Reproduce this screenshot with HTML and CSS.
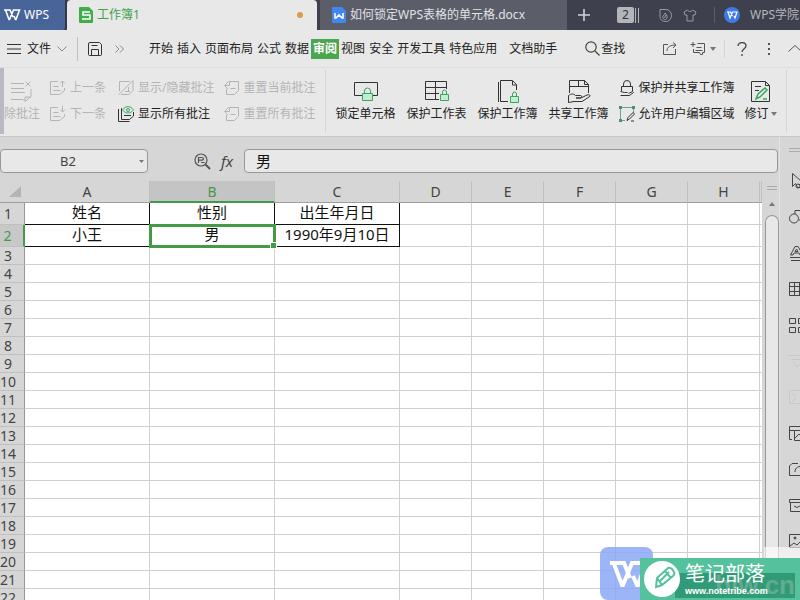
FILE: index.html
```html
<!DOCTYPE html>
<html lang="zh-CN">
<head>
    <meta charset="UTF-8">
    <meta name="viewport" content="width=device-width, initial-scale=1.0">
    <title>工作簿1 - WPS</title>
    <link rel="stylesheet" href="styles.css">
</head>
<body>

    <!-- Document tabs -->
    <header class="titlebar">
        <button class="home-tab">
            <svg width="17" height="12" viewBox="0 0 17 12" fill="none" stroke="#fff" stroke-width="1.600"><path d="M0 1h6l3 7M1.500 1l3.500 9.500h.5L9.500 1h6L12 10.500h-.5L10 7"/></svg>
            WPS
        </button>
        <button class="doc-tab active">
            <svg width="14" height="16" viewBox="0 0 14 16"><path d="M1 0h9l4 4v11a1 1 0 0 1-1 1H1a1 1 0 0 1-1-1V1a1 1 0 0 1 1-1z" fill="#3fae49"/><path d="M11 5H4v3h7v4H3" fill="none" stroke="#fff" stroke-width="1.6"/></svg>
            <span class="doc-name">工作簿1</span>
            <span class="unsaved"></span>
        </button>
        <button class="doc-tab">
            <svg width="14" height="16" viewBox="0 0 14 16"><path d="M1 0h9l4 4v11a1 1 0 0 1-1 1H1a1 1 0 0 1-1-1V1a1 1 0 0 1 1-1z" fill="#4286f0"/><path d="M3 6v5h1l3-3 3 3h1V6" fill="none" stroke="#fff" stroke-width="1.6"/></svg>
            <span class="doc-name">如何锁定WPS表格的单元格.docx</span>
        </button>
        <div class="title-tools">
            <button class="new-tab" aria-label="新建">
                <svg width="12" height="12" viewBox="0 0 12 12" stroke="#d0d0d6" stroke-width="1.6"><path d="M6 0v12M0 6h12"/></svg>
            </button>
            <span class="tab-count">2</span>
            <span class="tab-stack"></span>
            <svg class="tool-eco" width="13" height="13" viewBox="0 0 13 13" fill="none" stroke="#9698a2"><path d="M1 .5h6a5.500 6 0 0 1 0 12H6a5 5 0 0 1-5-5z"/><path d="M4 9c-1-2 1-2 2-5 1 2 3 3 2 5s-3 2-4 0zM6 9V7l2-1"/></svg>
            <svg class="tool-skin" width="14" height="13" viewBox="0 0 14 13" fill="none" stroke="#9698a2"><path d="M4.500 1 1 3l1 3h2v6h6V6h2l1-3-3.500-2c-1 2-4 2-5 0z"/></svg>
            <span class="title-sep"></span>
            <svg class="avatar" width="16" height="16" viewBox="0 0 16 16"><circle cx="8" cy="8" r="8" fill="#3e7ae8"/><path d="M3 5h3.500l2 4M4 5l2 6 2.500-6H13l-2 6-1-2" fill="none" stroke="#fff" stroke-width="1.200"/></svg>
            <span class="account">WPS学院</span>
        </div>
    </header>

    <!-- Menu -->
    <nav class="menubar">
        <button class="file-menu">
            <svg width="14" height="10" viewBox="0 0 14 10" stroke="#333"><path d="M0 .5h14M0 5h14M0 9.500h14"/></svg>
            文件
            <svg class="file-arrow" width="10" height="6" viewBox="0 0 10 6" fill="none" stroke="#888"><path d="m.5.5 4.500 4.500L9.500.5"/></svg>
        </button>
        <button class="save" aria-label="保存">
            <svg width="14" height="14" viewBox="0 0 14 14" fill="none" stroke="#333"><path d="M.5 12.500V2Q.5.500 2 .5h9.500l2 2v10q0 1-1 1h-11q-1 0-1-1zM3.500 3.500h6M3.500 13.500v-6h7v6"/></svg>
        </button>
        <button class="more" aria-label="更多">
            <svg width="9" height="8" viewBox="0 0 9 8" fill="none" stroke="#888"><path d="m.5.5 3.500 3.500L.5 7.500M5 .5 8.500 4 5 7.500"/></svg>
        </button>
        <div class="menu-tabs">
            <button>开始</button>
            <button>插入</button>
            <button>页面布局</button>
            <button>公式</button>
            <button>数据</button>
            <button class="current">审阅</button>
            <button>视图</button>
            <button>安全</button>
            <button>开发工具</button>
            <button>特色应用</button>
            <button class="helper">文档助手</button>
        </div>
        <button class="search">
            <svg width="15" height="15" viewBox="0 0 15 15" fill="none" stroke="#444" stroke-width="1.200"><circle cx="6" cy="6" r="5.200"/><path d="m10 10 4.500 4.500"/></svg>
            查找
        </button>
        <div class="menu-right">
            <svg width="14" height="13" viewBox="0 0 14 13" fill="none" stroke="#555"><path d="M5 2.500H.5v10h12V7M4 9c0-4 3-6 9-6M10 .5 13 3l-3 3"/></svg>
            <svg class="comment-icon" width="17" height="14" viewBox="0 0 17 14" fill="none" stroke="#555"><path d="M3 0v5M.5 2.500h5M7.500 1.500h7v9h-2v2h-2l-1-2H3.500V7M6.500 5.500h5M5.500 8.500h7"/></svg>
            <svg class="caret" width="6" height="4" viewBox="0 0 6 4"><path d="M0 0h6L3 4z" fill="#777"/></svg>
            <span class="menu-sep"></span>
            <svg class="help" width="10" height="14" viewBox="0 0 10 14" fill="none" stroke="#444" stroke-width="1.300"><path d="M1 4c0-4.500 8-4.500 8 0 0 2.500-4 3-4 6M5 12v2"/></svg>
            <svg class="dots" width="2" height="12" viewBox="0 0 2 12" fill="#555"><path d="M0 0h2v2H0zM0 5h2v2H0zM0 10h2v2H0z"/></svg>
            <svg class="fold" width="14" height="7" viewBox="0 0 14 7" fill="none" stroke="#555"><path d="m.5 6.500 6.500-6 6.500 6"/></svg>
        </div>
    </nav>

    <!-- Review ribbon -->
    <section class="ribbon">
        <button class="big-button delete-note" disabled>
            <svg width="22" height="22" viewBox="0 0 22 22" fill="none" stroke="#b4b4b4"><path d="M0 3.500h13M0 8.500h13M0 12.500h14M0 19.500h12l2 2 6-5V9M14.500 1.500l5 5M19.500 1.500l-5 5M14 21v-4h6"/></svg>
            <span>除批注</span>
        </button>
        <div class="pair prev-next">
            <button disabled>
                <svg width="16" height="16" viewBox="0 0 16 16" fill="none" stroke="#b4b4b4"><path d="M8 1.500H.5v13h9l5-4V8M3.500 6.500h5M3.500 10.500h7M12.500 7V1M10 3.500 12.500 1 15 3.500"/></svg>
                上一条
            </button>
            <button disabled>
                <svg width="16" height="16" viewBox="0 0 16 16" fill="none" stroke="#b4b4b4"><path d="M8 1.500H.5v13h9l5-4V8M3.500 6.500h5M3.500 10.500h7M12.500 0v6M10 3.500 12.500 6 15 3.500"/></svg>
                下一条
            </button>
        </div>
        <div class="pair show-notes">
            <button disabled>
                <svg width="16" height="16" viewBox="0 0 16 16" fill="none" stroke="#b4b4b4"><path d="M1.500 11V1.500H12M.5 15 15 .5v10l-4 4H3M7 11.500h5M10.500 7v4"/></svg>
                显示/隐藏批注
            </button>
            <button>
                <svg width="16" height="16" viewBox="0 0 16 16" fill="none" stroke="#333"><path d="M.5 3v12.500h11M4 2.500h-.5v11h8l4-3.500V6M6 9.500h7"/><path d="M4.500 4c3-4.500 8-4.500 11 0-3 4-8 4-11 0z" stroke="#35a85e"/><circle cx="10" cy="4" r="1.500" stroke="#35a85e"/></svg>
                显示所有批注
            </button>
        </div>
        <div class="pair reset-notes">
            <button disabled>
                <svg width="16" height="16" viewBox="0 0 16 16" fill="none" stroke="#b4b4b4"><path d="M6 1.500h8.500v9l-4 4h-8V9M1 5.500h4.500V1M4.500 1.500.5 5.500 4 9M6.500 8.500h5"/></svg>
                重置当前批注
            </button>
            <button disabled>
                <svg width="16" height="16" viewBox="0 0 16 16" fill="none" stroke="#b4b4b4"><path d="M6 1.500h8.500v9l-4 4h-8V9M1 5.500h4.500V1M4.500 1.500.5 5.500 4 9M6.500 8.500h5"/></svg>
                重置所有批注
            </button>
        </div>
        <span class="ribbon-sep"></span>
        <div class="protect">
            <button class="big-button">
                <svg width="24" height="24" viewBox="0 0 24 24" fill="none" stroke="#333"><path d="M8 15.500H.5v-13h23v13H19"/><path d="M10.500 13v-2a3 3 0 0 1 6 0v2" stroke="#35a85e"/><path d="M8.500 13.500h10v7h-10z" fill="#c4ecd0" stroke="#35a85e"/></svg>
                <span>锁定单元格</span>
            </button>
            <button class="big-button">
                <svg width="24" height="24" viewBox="0 0 24 24" fill="none" stroke="#333"><path d="M14 19.500H.5v-18h21V9M.5 7.500h21M.5 13.500H14M10.500 1.500v18"/><path d="M17.500 14v-2a2 2 0 0 1 4 0v2" stroke="#35a85e"/><path d="M15.500 14.500h8v6h-8z" fill="#c4ecd0" stroke="#35a85e"/></svg>
                <span>保护工作表</span>
            </button>
            <button class="big-button">
                <svg width="24" height="24" viewBox="0 0 24 24" fill="none" stroke="#333"><path d="M2.500 2v20M12 21.500H4.500V.5h12l4 4V10M16.500 1v4h4"/><path d="M16.500 16v-2a2 2 0 0 1 4 0v2" stroke="#35a85e"/><path d="M14.500 16.500h8v6h-8z" fill="#c4ecd0" stroke="#35a85e"/></svg>
                <span>保护工作簿</span>
            </button>
            <button class="big-button">
                <svg width="24" height="24" viewBox="0 0 24 24" fill="none" stroke="#333"><path d="M2.500 13V.5h15l4 4V13M2.500 6.500h19M11.500.5v6M17.500.5v4h4"/><path d="M1.500 15.500c3-2 5-2 7 0h5c2 0 1 2.500-1 2.500H9h5l6-3c3-1 4 1 2 2l-7 4.500H7l-5.500 1z" fill="#e8e8e8"/></svg>
                <span>共享工作簿</span>
            </button>
        </div>
        <div class="pair share-area">
            <button>
                <svg width="16" height="16" viewBox="0 0 16 16" fill="none" stroke="#333"><path d="M4.500 6V4a3.500 3.500 0 0 1 7 0v2M2.500 11V6.500h11V11M1.500 11.500l4 1h3M1.500 15.500h9l4-3-1-1-4 2"/></svg>
                保护并共享工作簿
            </button>
            <button>
                <svg width="16" height="16" viewBox="0 0 16 16" fill="none" stroke="#6ba38e"><path d="M1.500 1.500h13M1.500 2.500v12H6M14.500 2v5"/><path d="M0 0h3v3H0zM13 0h3v3h-3zM0 13h3v3H0z" fill="#4a8e75" stroke="none"/><path d="m8 14.500 1-3 5-5 1.500 1.500-5 5zM12 15h3" stroke="#333"/></svg>
                允许用户编辑区域
            </button>
        </div>
        <button class="big-button revise">
            <svg width="20" height="24" viewBox="0 0 20 24" fill="none" stroke="#333"><path d="M.5 1.500h14l4 4v16H.5zM14.500 1.500v4h4M4 6.500h6M4 10.500h4"/><path d="m5 19 2-5 7-6 2 2-7 7zM12 19h4" stroke="#35a85e" stroke-width="1.500"/></svg>
            <span>修订 <svg width="6" height="4" viewBox="0 0 6 4"><path d="M0 0h6L3 4z" fill="#777"/></svg></span>
        </button>
        <span class="ribbon-sep"></span>
    </section>

    <div class="workspace">
        <main class="editor">
            <div class="formula-bar">
                <div class="name-box">
                    <input type="text" aria-label="名称框" value="B2">
                    <svg width="5" height="3" viewBox="0 0 5 3"><path d="M0 0h5L2.500 3z" fill="#777"/></svg>
                </div>
                <svg class="zoom-icon" width="17" height="17" viewBox="0 0 17 17" fill="none" stroke="#555" stroke-width="1.200"><circle cx="7" cy="7" r="6"/><path d="M4.500 10V4.500H8q1.500 0 1.500 1.300T8 7.200H4.500M7 9.500h3.500"/><path d="m11.500 11.500 4.500 4.500" stroke-width="2"/></svg>
                <span class="fx">fx</span>
                <input class="formula" type="text" aria-label="编辑栏" value="男">
            </div>

            <div class="grid-area">
                <table class="sheet">
                    <colgroup>
                        <col class="col-head">
                        <col class="col-wide"><col class="col-wide"><col class="col-wide">
                        <col class="col-std"><col class="col-std"><col class="col-std"><col class="col-std"><col class="col-std">
                        <col>
                    </colgroup>
                    <thead>
                        <tr>
                            <th class="corner"><svg width="12" height="11" viewBox="0 0 12 11"><path d="M12 0v11H0z" fill="#b4b4b4"/></svg></th>
                            <th>A</th><th class="selected">B</th><th>C</th><th>D</th><th>E</th><th>F</th><th>G</th><th>H</th><th></th>
                        </tr>
                    </thead>
                    <tbody>
                        <tr class="data"><th>1</th><td>姓名</td><td class="above">性别</td><td>出生年月日</td><td></td><td></td><td></td><td></td><td></td><td></td></tr>
                        <tr class="data"><th class="selected">2</th><td>小王</td><td class="cursor">男</td><td>1990年9月10日</td><td></td><td></td><td></td><td></td><td></td><td></td></tr>
                        <tr><th>3</th><td></td><td></td><td></td><td></td><td></td><td></td><td></td><td></td><td></td></tr>
                        <tr><th>4</th><td></td><td></td><td></td><td></td><td></td><td></td><td></td><td></td><td></td></tr>
                        <tr><th>5</th><td></td><td></td><td></td><td></td><td></td><td></td><td></td><td></td><td></td></tr>
                        <tr><th>6</th><td></td><td></td><td></td><td></td><td></td><td></td><td></td><td></td><td></td></tr>
                        <tr><th>7</th><td></td><td></td><td></td><td></td><td></td><td></td><td></td><td></td><td></td></tr>
                        <tr><th>8</th><td></td><td></td><td></td><td></td><td></td><td></td><td></td><td></td><td></td></tr>
                        <tr><th>9</th><td></td><td></td><td></td><td></td><td></td><td></td><td></td><td></td><td></td></tr>
                        <tr><th>10</th><td></td><td></td><td></td><td></td><td></td><td></td><td></td><td></td><td></td></tr>
                        <tr><th>11</th><td></td><td></td><td></td><td></td><td></td><td></td><td></td><td></td><td></td></tr>
                        <tr><th>12</th><td></td><td></td><td></td><td></td><td></td><td></td><td></td><td></td><td></td></tr>
                        <tr><th>13</th><td></td><td></td><td></td><td></td><td></td><td></td><td></td><td></td><td></td></tr>
                        <tr><th>14</th><td></td><td></td><td></td><td></td><td></td><td></td><td></td><td></td><td></td></tr>
                        <tr><th>15</th><td></td><td></td><td></td><td></td><td></td><td></td><td></td><td></td><td></td></tr>
                        <tr><th>16</th><td></td><td></td><td></td><td></td><td></td><td></td><td></td><td></td><td></td></tr>
                        <tr><th>17</th><td></td><td></td><td></td><td></td><td></td><td></td><td></td><td></td><td></td></tr>
                        <tr><th>18</th><td></td><td></td><td></td><td></td><td></td><td></td><td></td><td></td><td></td></tr>
                        <tr><th>19</th><td></td><td></td><td></td><td></td><td></td><td></td><td></td><td></td><td></td></tr>
                        <tr><th>20</th><td></td><td></td><td></td><td></td><td></td><td></td><td></td><td></td><td></td></tr>
                        <tr><th>21</th><td></td><td></td><td></td><td></td><td></td><td></td><td></td><td></td><td></td></tr>
                        <tr><th>22</th><td></td><td></td><td></td><td></td><td></td><td></td><td></td><td></td><td></td></tr>
                    </tbody>
                </table>
                <div class="scrollbar">
                    <span class="split-handle"></span>
                    <svg width="6" height="4" viewBox="0 0 6 4"><path d="M0 4h6L3 0z" fill="#777"/></svg>
                    <div class="thumb"></div>
                </div>
            </div>
        </main>

        <!-- Side tools -->
        <aside class="side-panel">
            <span class="grip"></span>
            <svg viewBox="0 0 16 16"><path d="M3.500.5v13l3-3 2 4h4v-3h-3M3.500.5l9 8"/><circle cx="9" cy="13" r="2"/></svg>
            <svg viewBox="0 0 16 16"><circle cx="5" cy="9.500" r="4.500"/><path d="M6 5V1.500h9V11h-5"/></svg>
            <svg viewBox="0 0 16 16"><path d="M1.500 10 6 1.500h3L14 10h-3l-1-2H5l-1 2zM6 6.500h3L7.500 4zM1 12.500h15M2 15.500h14"/></svg>
            <svg viewBox="0 0 16 16"><path d="M.5 1.500h15v13H.5zM.5 5.500h15M.5 10.500h15M5.500 1.500v13M10.500 1.500v13"/></svg>
            <svg viewBox="0 0 16 16"><path d="M.5 1.500h6v5h-6zM9.500 1.500h6v5h-6zM.5 10.500h6v5h-6zM9.500 10.500h6v5h-6z"/></svg>
            <svg class="dim" viewBox="0 0 16 16"><path d="M0 2.500h16M3 6.500h12M4 8l4 6 6-6"/></svg>
            <svg class="dim" viewBox="0 0 16 16"><path d="M.5 1.500h15v13H.5zM3 4l4 4M3 13l4-4"/></svg>
            <svg viewBox="0 0 16 16"><path d="M3 14.500H.5v-13h15M5.500 5.500h10v10h-10zM.5 5.500h5M6 13l4-4 3 3 3-3"/></svg>
            <svg viewBox="0 0 16 16"><path d="M9 2.500H3L.5 5v9.500h14V9M6 11c0-5 4-6 9-6M12 1l4 4-4 4"/></svg>
            <svg viewBox="0 0 16 16"><path d="M.5 2.500h15v3H.5zM1.500 5.500v9h14M5 9q3 3 6 0"/></svg>
            <svg viewBox="0 0 16 16"><path d="M.5 1.500h15v13H.5zM1 13l4-3 3 2 5-5 2 2"/><circle cx="6" cy="5" r="1" fill="#444"/></svg>
        </aside>
    </div>

    <!-- Watermarks over the page corner -->
    <div class="haze"></div>
    <div class="wps-mark">
        <svg width="40" height="28" viewBox="0 0 40 28" fill="none" stroke="#fff" stroke-width="4"><path d="M0 3h14l6 15M4 4l8 21h1L22 3h14l-8 22h-1l-4-9"/></svg>
    </div>
    <div class="tribe-mark">
        <span class="domain">blw.cn</span>
        <svg width="36" height="36" viewBox="0 0 36 36"><circle cx="18" cy="18" r="18" fill="#fff"/><path d="m13 17 11-10q2-1 4 1l2 3q1 2-1 4L18 24l-6 2zM13 17l5 7M21 10l6 7M16 20l9-9" fill="none" stroke="#55c29d" stroke-width="2"/></svg>
        <div class="tribe-text">
            <strong>笔记部落</strong>
            <small>www.notetribe.com</small>
        </div>
    </div>

</body>
</html>
```
FILE: styles.css
```css
* {
    box-sizing: border-box;
}

body {
    margin: 0;
    height: 100vh;
    display: flex;
    flex-direction: column;
    overflow: hidden;
    font-family: "Noto Sans", "Noto Sans CJK SC", sans-serif;
    font-size: 12px;
    line-height: 16px;
    color: #222;
    background: #e8e8e8;
}

button {
    display: flex;
    align-items: center;
    padding: 0;
    border: none;
    background: none;
    font: inherit;
    color: inherit;
    white-space: nowrap;
}

button:disabled {
    color: #b4b4b4;
}

svg {
    flex: none;
}

/* title bar */
.titlebar {
    display: flex;
    flex: none;
    height: 30px;
    background: #3e404e;
    overflow: hidden;
}

.home-tab {
    flex: none;
    width: 67px;
    padding-left: 4px;
    gap: 3px;
    background: #48659a;
    border-right: 2px solid #36384a;
    border-radius: 0 0 4px 0;
    color: #fff;
}

.doc-tab {
    flex: none;
    width: 247px;
    margin-left: 3px;
    padding: 0 14px 0 12px;
    gap: 4px;
    background: #5b5d69;
    color: #e2e2e6;
}

.doc-tab.active {
    width: 250px;
    margin-left: 0;
    background: #e8e8e8;
    border-radius: 4px 4px 0 0;
    color: #3fa34a;
}

.doc-name {
    flex: 1;
    text-align: left;
}

.unsaved {
    width: 6px;
    height: 6px;
    border-radius: 50%;
    background: #e0984c;
}

.title-tools {
    display: flex;
    align-items: center;
    flex: 1;
    padding-left: 11px;
}

.tab-count {
    margin-left: 27px;
    width: 17px;
    text-align: center;
    background: #b4b5bb;
    color: #333;
    border-radius: 2px;
}

.tab-stack {
    width: 4px;
    height: 15px;
    margin: 0 20px 0 1px;
    border-left: 1px solid #b4b5bb;
    border-right: 1px solid #b4b5bb;
}

.tool-skin {
    margin-left: 11px;
}

.title-sep {
    width: 1px;
    height: 16px;
    margin: 0 9px 0 17px;
    background: #5b5d69;
}

.account {
    margin-left: 10px;
    color: #b4b5bb;
    white-space: nowrap;
}

/* menu */
.menubar {
    display: flex;
    flex: none;
    align-items: center;
    height: 38px;
    padding-left: 7px;
    border-bottom: 1px solid #dcdcdc;
}

.file-menu {
    gap: 6px;
    height: 24px;
    padding-right: 10px;
    border-right: 1px solid #c0c0c0;
}

.save {
    margin-left: 10px;
}

.more {
    margin-left: 13px;
}

.menu-tabs {
    display: flex;
    margin-left: 23px;
}

.menu-tabs button {
    height: 20px;
    padding: 0 2px;
}

.menu-tabs .current {
    background: #4ba650;
    color: #fff;
    font-weight: bold;
}

.menu-tabs .helper {
    margin-left: 8px;
}

.search {
    margin-left: 26px;
    gap: 1px;
}

.menu-right {
    display: flex;
    align-items: center;
    margin-left: auto;
    overflow: hidden;
}

.comment-icon {
    margin-left: 13px;
}

.caret {
    margin-left: 3px;
}

.menu-sep {
    width: 1px;
    height: 18px;
    margin-left: 8px;
    background: #d4d4d4;
}

.help {
    margin-left: 12px;
}

.dots {
    margin-left: 21px;
}

.fold {
    margin-left: 18px;
    margin-right: -2px;
}

/* ribbon */
.ribbon {
    display: flex;
    flex: none;
    align-items: center;
    height: 69px;
    padding-bottom: 2px;
    border-bottom: 1px solid #c8c8c8;
    overflow: hidden;
}

.big-button {
    flex-direction: column;
    gap: 2px;
}

.delete-note {
    justify-content: center;
    height: 66px;
    gap: 4px;
    border-left: 4px solid #b9b9c3;
}

.pair {
    display: flex;
    flex-direction: column;
    gap: 10px;
}

.pair button {
    gap: 4px;
}

.prev-next {
    margin-left: 10px;
}

.show-notes {
    margin-left: 12px;
}

.reset-notes {
    margin-left: 9px;
}

.ribbon-sep {
    flex: none;
    width: 1px;
    height: 62px;
    margin-left: 9px;
    background: #d4d4d4;
}

.protect {
    display: flex;
    gap: 11px;
    margin-left: 10px;
}

.share-area {
    margin-left: 10px;
}

.revise {
    margin-left: 10px;
}

.revise span {
    display: flex;
    align-items: center;
    gap: 2px;
}

/* work area */
.workspace {
    display: flex;
    flex: 1;
    min-height: 0;
    background: #d6d6d6;
}

.editor {
    display: flex;
    flex-direction: column;
    flex: 1;
    min-width: 0;
}

.formula-bar {
    display: flex;
    flex: none;
    align-items: center;
    height: 44px;
    padding: 4px 1px 0 0;
}

.name-box {
    display: flex;
    align-items: center;
    width: 148px;
    height: 24px;
    padding-right: 3px;
    border: 1px solid #979797;
    border-radius: 4px;
    background: #e8e8e8;
}

.name-box input {
    flex: 1;
    min-width: 0;
    border: none;
    background: none;
    padding: 0 4px 0 0;
    font: inherit;
    font-size: 13px;
    color: #444;
    text-align: center;
}

.zoom-icon {
    margin-left: 46px;
}

.fx {
    width: 23px;
    margin-left: 10px;
    font-size: 15px;
    font-style: italic;
    color: #444;
}

.formula {
    flex: 1;
    min-width: 0;
    height: 24px;
    padding: 0 11px 2px;
    border: 1px solid #979797;
    border-radius: 4px;
    background: #e8e8e8;
    font: inherit;
    font-size: 15px;
    color: #111;
}

/* sheet */
.grid-area {
    display: flex;
    flex: 1;
    min-height: 0;
    overflow: hidden;
}

.sheet {
    flex: 1;
    min-width: 0;
    align-self: flex-start;
    table-layout: fixed;
    border-collapse: separate;
    border-spacing: 0;
}

.col-head {
    width: 25px;
}

.col-wide {
    width: 125px;
}

.col-std {
    width: 72px;
}

.sheet th,
.sheet td {
    height: 18px;
    padding: 0;
    border-right: 1px solid #d0d0d0;
    border-bottom: 1px solid #d0d0d0;
    line-height: 17px;
    text-align: center;
}

.sheet th {
    border-color: #c0c0c0;
    font-size: 14px;
    font-weight: normal;
    color: #444;
}

.sheet thead th {
    height: 22px;
    border-bottom-color: #a0a0a0;
}

.sheet thead .selected {
    background: #c4c4c4;
    border-bottom: 2px solid #459a47;
    color: #459a47;
}

.sheet .corner {
    text-align: right;
    padding-right: 4px;
    border-right: none;
}

.sheet tbody th {
    padding-right: 8px;
    border-right-color: #979797;
}

.sheet tbody .selected {
    background: #c8c8c8;
    border-right: 2px solid #459a47;
    color: #459a47;
}

.sheet td {
    background: #fff;
    font-size: 15px;
    color: #111;
}

.sheet td:last-child {
    border-right: none;
}

.sheet .data th,
.sheet .data td {
    height: 22px;
    line-height: 19px;
}

.sheet .data td {
    padding-bottom: 2px;
}

.data td:nth-child(-n+4) {
    border-color: #111;
}

.sheet .cursor {
    position: relative;
    outline: 3px solid #459a47;
    outline-offset: -2px;
}

/* fill handle */
.cursor::after {
    content: "";
    position: absolute;
    right: -3px;
    bottom: -3px;
    width: 5px;
    height: 5px;
    background: #459a47;
    border: 1px solid #fff;
    box-sizing: content-box;
}

.scrollbar {
    display: flex;
    flex-direction: column;
    align-items: center;
    flex: none;
    width: 17px;
    padding-left: 3px;
}

.split-handle {
    flex: none;
    width: 10px;
    height: 4px;
    margin: 5px 0 12px;
    border: 1px solid #aaa;
    border-width: 1px 0;
}

.thumb {
    flex: 1;
    width: 14px;
    margin-top: 9px;
    border: 1px solid #979797;
    border-bottom: none;
    border-radius: 7px 7px 0 0;
    background: #e8e8e8;
}

/* side panel */
.side-panel {
    display: flex;
    flex-direction: column;
    flex: none;
    width: 21px;
    padding-left: 9px;
    border-left: 1px solid #e2e2e2;
    overflow: hidden;
}

.side-panel svg {
    width: 16px;
    height: 16px;
    margin: 10px 0;
    fill: none;
    stroke: #444;
}

.side-panel .dim {
    stroke: #c8c8c8;
}

.grip {
    flex: none;
    width: 16px;
    height: 4px;
    margin: 11px 0;
    border: 1px solid #aaa;
    border-width: 1px 0;
}

/* watermarks */
.haze {
    position: fixed;
    right: 0;
    bottom: 42px;
    width: 36px;
    height: 11px;
    background: rgba(255, 255, 255, 0.6);
}

.wps-mark {
    position: fixed;
    right: 147px;
    bottom: 0;
    width: 53px;
    height: 53px;
    padding: 13px 0 0 10px;
    border-radius: 8px;
    background: rgba(137, 168, 245, 0.85);
}

.tribe-mark {
    position: fixed;
    right: 0;
    bottom: 0;
    display: flex;
    align-items: center;
    width: 160px;
    height: 42px;
    padding-left: 4px;
    gap: 5px;
    background: #55c29d;
    color: #fff;
    overflow: hidden;
}

.domain {
    position: absolute;
    right: 5px;
    bottom: 2px;
    width: 120px;
    height: 25px;
    font-family: "Liberation Sans", sans-serif;
    font-size: 26px;
    font-weight: bold;
    line-height: 25px;
    text-align: right;
    color: #62ab90;
    background: #319b78;
}

.tribe-mark svg {
    position: relative;
}

.tribe-text {
    position: relative;
    display: flex;
    flex-direction: column;
}

.tribe-text strong {
    font-size: 20px;
    font-weight: normal;
    line-height: 24px;
}

.tribe-text small {
    font-family: "Liberation Sans", sans-serif;
    font-size: 9px;
    font-weight: bold;
    line-height: 10px;
}
```
